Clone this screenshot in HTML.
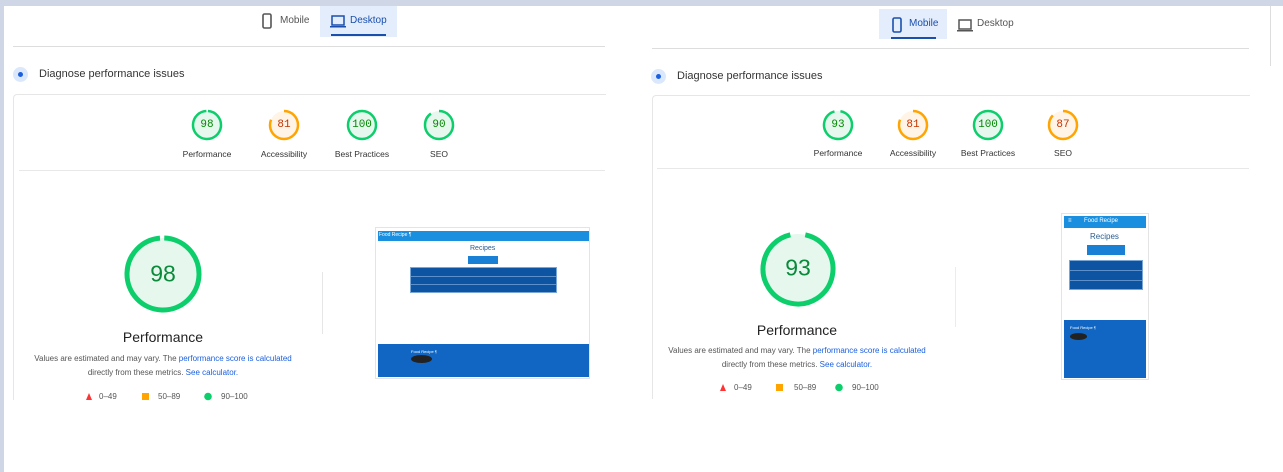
<!DOCTYPE html>
<html><head><meta charset="utf-8"><style>
*{margin:0;padding:0;box-sizing:border-box}
body{width:1283px;height:472px;background:#fff;position:relative;overflow:hidden;font-family:"Liberation Sans",sans-serif;color:#212121}
.a{position:absolute}
.t{position:absolute;white-space:nowrap}
.lbl{font-size:8.5px;color:#333;transform:translateX(-50%)}
.num{font-family:"Liberation Mono",monospace;transform:translate(-50%,-50%)}
.desc{font-size:8px;color:#555;text-align:center;width:300px;line-height:14px;transform:translateX(-50%)}
.desc span{color:#1a5fe0}
.leg{font-size:8px;color:#555}
.row{position:absolute;left:0;right:0;height:1px;background:#5d8fc9}
</style></head><body>
<div class="a" style="left:0;top:0;width:1283px;height:6px;background:#cfd6e6"></div>
<div class="a" style="left:0;top:0;width:4px;height:472px;background:#cfd6e6"></div>

<!-- LEFT PANEL -->
<svg class="a" style="left:262px;top:13px" width="10" height="16"><rect x="1" y="1" width="8" height="14" rx="1.5" fill="none" stroke="#555" stroke-width="1.6"/></svg>
<div class="t" style="left:280px;top:15px;font-size:10px;color:#555">Mobile</div>
<div class="a" style="left:320px;top:6px;width:77px;height:31px;background:#e3edfb"></div>
<div class="a" style="left:331px;top:34px;width:55px;height:2px;background:#1a4fae"></div>
<svg class="a" style="left:330px;top:15px" width="16" height="13"><rect x="2" y="1" width="12" height="9" fill="none" stroke="#1a4fae" stroke-width="1.5"/><rect x="0" y="11" width="16" height="1.5" fill="#1a4fae"/></svg>
<div class="t" style="left:350px;top:15px;font-size:10px;color:#1a4fae">Desktop</div>
<div class="a" style="left:13px;top:46px;width:592px;height:1px;background:#ddd"></div>
<div class="a" style="left:13px;top:67px;width:15px;height:15px;border-radius:50%;background:#dbe8fb"></div>
<div class="a" style="left:18px;top:72px;width:5px;height:5px;border-radius:50%;background:#1a5fe0"></div>
<div class="t" style="left:39px;top:68px;font-size:11px;color:#333">Diagnose performance issues</div>
<div class="a" style="left:13px;top:94px;width:593px;height:306px;border:1px solid #e6e6e6;border-bottom:none;border-right:none;border-radius:4px 0 0 0"></div>
<div class="a" style="left:19px;top:170px;width:586px;height:1px;background:#e8e8e8"></div>

<svg class="a" style="left:0;top:0" width="640" height="472">
<circle cx="207" cy="125" r="14" fill="#e6f8ee" stroke="#0cce6b" stroke-width="2.5" stroke-dasharray="86.2 88" transform="rotate(-86 207 125)"/>
<circle cx="284" cy="125" r="14" fill="#fff4e6" stroke="#ffa400" stroke-width="2.5" stroke-dasharray="71.3 88" transform="rotate(-90 284 125)"/>
<circle cx="362" cy="125" r="14" fill="#e6f8ee" stroke="#0cce6b" stroke-width="2.5"/>
<circle cx="439" cy="125" r="14" fill="#e6f8ee" stroke="#0cce6b" stroke-width="2.5" stroke-dasharray="79.2 88" transform="rotate(-90 439 125)"/>
<circle cx="163" cy="274" r="36" fill="#e6f8ee" stroke="#0cce6b" stroke-width="5" stroke-dasharray="221.5 226.2" transform="rotate(-88 163 274)"/>
<polygon points="86,400 89,393 92,400" fill="#f33"/>
<rect x="142" y="393" width="7" height="7" fill="#ffa400"/>
<circle cx="208" cy="396.5" r="3.8" fill="#0cce6b"/>
<rect x="322" y="272" width="1" height="62" fill="#e6e6e6"/>
</svg>
<div class="t num" style="left:207px;top:125px;font-size:11px;color:#080">98</div>
<div class="t num" style="left:284px;top:125px;font-size:11px;color:#c33300">81</div>
<div class="t num" style="left:362px;top:125px;font-size:11px;color:#080">100</div>
<div class="t num" style="left:439px;top:125px;font-size:11px;color:#080">90</div>
<div class="t lbl" style="left:207px;top:149px">Performance</div>
<div class="t lbl" style="left:284px;top:149px">Accessibility</div>
<div class="t lbl" style="left:362px;top:149px">Best Practices</div>
<div class="t lbl" style="left:439px;top:149px">SEO</div>
<div class="t num" style="left:163px;top:274px;font-size:23px;color:#0a8a3a;font-family:'Liberation Sans',sans-serif">98</div>
<div class="t" style="left:163px;top:329px;font-size:14px;color:#222;transform:translateX(-50%)">Performance</div>
<div class="t desc" style="left:163px;top:352px">Values are estimated and may vary. The <span>performance score is calculated</span><br>directly from these metrics. <span>See calculator.</span></div>
<div class="t leg" style="left:99px;top:392px">0–49</div>
<div class="t leg" style="left:158px;top:392px">50–89</div>
<div class="t leg" style="left:221px;top:392px">90–100</div>

<!-- desktop thumbnail -->
<div class="a" style="left:375px;top:227px;width:215px;height:152px;border:1px solid #e4e4e4;background:#fff">
 <div class="a" style="left:2px;top:3px;width:211px;height:10px;background:#1a8fe0"></div>
 <div class="t" style="left:3px;top:4px;font-size:5px;color:#fff">Food Recipe ¶</div>
 <div class="t" style="left:94px;top:17px;font-size:7px;color:#2a5d8f">Recipes</div>
 <div class="a" style="left:92px;top:28px;width:30px;height:8px;background:#1a80d6"></div>
 <div class="a" style="left:34px;top:39px;width:147px;height:26px;background:#0d55a3;border:1px solid #7aa6d6"><div class="row" style="top:8px"></div><div class="row" style="top:16px"></div></div>
 <div class="a" style="left:2px;top:116px;width:211px;height:33px;background:#1066c2"></div>
 <div class="t" style="left:35px;top:121px;font-size:4px;color:#fff">Food Recipe ¶</div>
 <div class="a" style="left:35px;top:127px;width:21px;height:8px;border-radius:50%;background:#222"></div>
</div>

<!-- RIGHT PANEL -->
<div class="a" style="left:1270px;top:6px;width:1px;height:60px;background:#ddd"></div>
<div class="a" style="left:879px;top:9px;width:68px;height:30px;background:#e3edfb"></div>
<div class="a" style="left:891px;top:37px;width:45px;height:2px;background:#1a4fae"></div>
<svg class="a" style="left:892px;top:17px" width="10" height="16"><rect x="1" y="1" width="8" height="14" rx="1.5" fill="none" stroke="#1a4fae" stroke-width="1.6"/></svg>
<div class="t" style="left:909px;top:18px;font-size:10px;color:#1a4fae">Mobile</div>
<svg class="a" style="left:957px;top:19px" width="16" height="13"><rect x="2" y="1" width="12" height="9" fill="none" stroke="#555" stroke-width="1.5"/><rect x="0" y="11" width="16" height="1.5" fill="#555"/></svg>
<div class="t" style="left:977px;top:18px;font-size:10px;color:#555">Desktop</div>
<div class="a" style="left:652px;top:48px;width:597px;height:1px;background:#ddd"></div>
<div class="a" style="left:651px;top:69px;width:15px;height:15px;border-radius:50%;background:#dbe8fb"></div>
<div class="a" style="left:656px;top:74px;width:5px;height:5px;border-radius:50%;background:#1a5fe0"></div>
<div class="t" style="left:677px;top:70px;font-size:11px;color:#333">Diagnose performance issues</div>
<div class="a" style="left:652px;top:95px;width:598px;height:304px;border:1px solid #e6e6e6;border-bottom:none;border-right:none;border-radius:4px 0 0 0"></div>
<div class="a" style="left:657px;top:168px;width:592px;height:1px;background:#e8e8e8"></div>

<svg class="a" style="left:640px;top:0" width="643" height="472">
<g transform="translate(-640 0)">
<circle cx="838" cy="125" r="14" fill="#e6f8ee" stroke="#0cce6b" stroke-width="2.5" stroke-dasharray="81.8 88" transform="rotate(-80 838 125)"/>
<circle cx="913" cy="125" r="14" fill="#fff4e6" stroke="#ffa400" stroke-width="2.5" stroke-dasharray="71.3 88" transform="rotate(-90 913 125)"/>
<circle cx="988" cy="125" r="14" fill="#e6f8ee" stroke="#0cce6b" stroke-width="2.5"/>
<circle cx="1063" cy="125" r="14" fill="#fff4e6" stroke="#ffa400" stroke-width="2.5" stroke-dasharray="76.5 88" transform="rotate(-90 1063 125)"/>
<circle cx="798" cy="269" r="35" fill="#e6f8ee" stroke="#0cce6b" stroke-width="5" stroke-dasharray="204.5 220" transform="rotate(-78 798 269)"/>
<polygon points="720,391 723,384 726,391" fill="#f33"/>
<rect x="776" y="384" width="7" height="7" fill="#ffa400"/>
<circle cx="839" cy="387.5" r="3.8" fill="#0cce6b"/>
<rect x="955" y="267" width="1" height="60" fill="#ececec"/>
</g>
</svg>
<div class="t num" style="left:838px;top:125px;font-size:11px;color:#080">93</div>
<div class="t num" style="left:913px;top:125px;font-size:11px;color:#c33300">81</div>
<div class="t num" style="left:988px;top:125px;font-size:11px;color:#080">100</div>
<div class="t num" style="left:1063px;top:125px;font-size:11px;color:#c33300">87</div>
<div class="t lbl" style="left:838px;top:148px">Performance</div>
<div class="t lbl" style="left:913px;top:148px">Accessibility</div>
<div class="t lbl" style="left:988px;top:148px">Best Practices</div>
<div class="t lbl" style="left:1063px;top:148px">SEO</div>
<div class="t num" style="left:798px;top:268px;font-size:23px;color:#0a8a3a;font-family:'Liberation Sans',sans-serif">93</div>
<div class="t" style="left:797px;top:322px;font-size:14px;color:#222;transform:translateX(-50%)">Performance</div>
<div class="t desc" style="left:797px;top:344px">Values are estimated and may vary. The <span>performance score is calculated</span><br>directly from these metrics. <span>See calculator.</span></div>
<div class="t leg" style="left:734px;top:383px">0–49</div>
<div class="t leg" style="left:794px;top:383px">50–89</div>
<div class="t leg" style="left:852px;top:383px">90–100</div>

<!-- mobile thumbnail -->
<div class="a" style="left:1061px;top:213px;width:88px;height:167px;border:1px solid #e4e4e4;background:#fff">
 <div class="a" style="left:2px;top:2px;width:82px;height:12px;background:#1a8fe0"></div>
 <div class="t" style="left:6px;top:4px;font-size:6px;color:#fff">≡</div>
 <div class="t" style="left:22px;top:4px;font-size:6px;color:#fff">Food Recipe</div>
 <div class="t" style="left:28px;top:18px;font-size:8px;color:#2a5d8f">Recipes</div>
 <div class="a" style="left:25px;top:31px;width:38px;height:10px;background:#1a80d6"></div>
 <div class="a" style="left:7px;top:46px;width:74px;height:30px;background:#0d55a3;border:1px solid #7aa6d6"><div class="row" style="top:9px"></div><div class="row" style="top:19px"></div></div>
 <div class="a" style="left:2px;top:106px;width:82px;height:58px;background:#1066c2"></div>
 <div class="t" style="left:8px;top:111px;font-size:4px;color:#fff">Food Recipe ¶</div>
 <div class="a" style="left:8px;top:119px;width:17px;height:7px;border-radius:50%;background:#222"></div>
</div>
</body></html>
